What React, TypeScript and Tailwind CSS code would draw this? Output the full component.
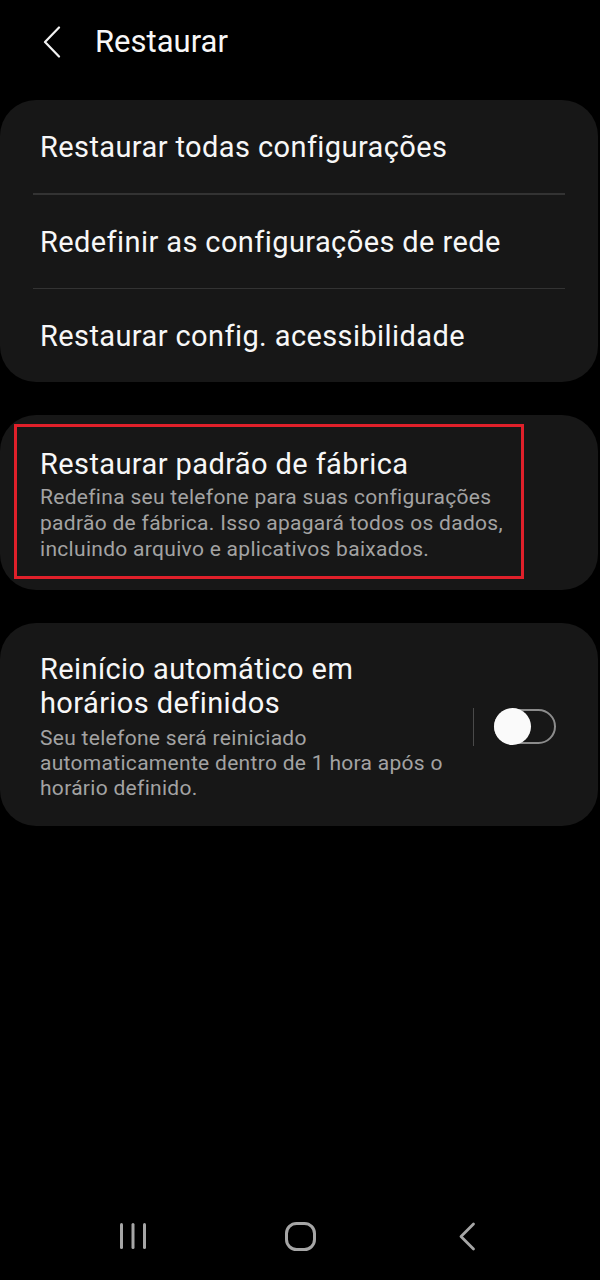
import React from "react"

const font = { fontFamily: "Roboto, 'Noto Sans', sans-serif" }

function BackChevron() {
  return (
    <svg width="20" height="32" viewBox="0 0 20 32" fill="none">
      <path d="M17 1.5 L3 16 L17 30.5" stroke="#f2f2f2" strokeWidth="2.2" strokeLinecap="round" strokeLinejoin="round" />
    </svg>
  )
}

function Toggle() {
  return (
    <div className="flex items-center gap-[20px] shrink-0">
      <div className="w-[1.5px] h-[38px] bg-[#4a4a4a]" />
      <div className="relative w-[62px] h-[35px]">
        <div className="absolute inset-0 rounded-full border-2 border-[#8c8c8c]" />
        <div className="absolute left-0 top-[-1px] w-[37px] h-[37px] rounded-full bg-[#fafafa]" />
      </div>
    </div>
  )
}

export default function App() {
  const items = [
    "Restaurar todas configurações",
    "Redefinir as configurações de rede",
    "Restaurar config. acessibilidade",
  ]

  return (
    <div className="min-h-[1280px] w-[600px] bg-black flex flex-col text-[#f7f7f7]" style={font}>
      {/* header */}
      <div className="h-[100px] flex items-start pt-[26px] pl-[42px]">
        <BackChevron />
        <span className="ml-[33px] -mt-[1px] text-[31px] leading-[34px]">Restaurar</span>
      </div>

      {/* first group */}
      <div className="bg-[#171717] rounded-[36px] mr-[2px]">
        {items.map((label, i) => (
          <div key={label}>
            {i > 0 && <div className="mx-[33px] h-[1.5px] bg-[#333333]" />}
            <div className="h-[93px] flex items-center pl-[40px] pt-[3px] text-[29px] tracking-[0.4px]">{label}</div>
          </div>
        ))}
      </div>

      {/* factory reset */}
      <div className="relative mt-[33px] bg-[#171717] rounded-[36px] mr-[2px] pl-[40px] pt-[32px] pb-[28px]">
        <div className="text-[29px] tracking-[0.4px] leading-[34px]">Restaurar padrão de fábrica</div>
        <div className="mt-[3px] text-[21px] tracking-[0.3px] leading-[26px] text-[#a3a3a3]">
          Redefina seu telefone para suas configurações
          <br />
          padrão de fábrica. Isso apagará todos os dados,
          <br />
          incluindo arquivo e aplicativos baixados.
        </div>
        <div className="absolute left-[14px] top-[9px] w-[510px] h-[155px] border-[3px] border-[#e0202a]" />
      </div>

      {/* auto restart */}
      <div className="mt-[33px] bg-[#171717] rounded-[36px] mr-[2px] pl-[40px] pr-[42px] pt-[29px] pb-[25px] flex items-center">
        <div className="flex-1">
          <div className="text-[29px] tracking-[0.4px] leading-[34px]">
            Reinício automático em
            <br />
            horários definidos
          </div>
          <div className="mt-[6px] text-[21px] tracking-[0.3px] leading-[25px] text-[#a3a3a3]">
            Seu telefone será reiniciado
            <br />
            automaticamente dentro de 1 hora após o
            <br />
            horário definido.
          </div>
        </div>
        <Toggle />
      </div>

      <div className="flex-1" />

      {/* navigation bar */}
      <div className="h-[84px] flex justify-center items-center pb-[4px]">
        <div className="w-[167px] flex justify-center">
          <svg width="28" height="28" viewBox="0 0 28 28">
            <rect x="1" y="1" width="3" height="26" rx="1.5" fill="#a6a6a6" />
            <rect x="12.5" y="1" width="3" height="26" rx="1.5" fill="#a6a6a6" />
            <rect x="24" y="1" width="3" height="26" rx="1.5" fill="#a6a6a6" />
          </svg>
        </div>
        <div className="w-[167px] flex justify-center">
          <svg width="31" height="29" viewBox="0 0 31 29">
            <rect x="1.5" y="1.5" width="28" height="26" rx="10" fill="none" stroke="#a6a6a6" strokeWidth="3" />
          </svg>
        </div>
        <div className="w-[167px] flex justify-center">
          <svg width="18" height="29" viewBox="0 0 18 29">
            <path d="M15.5 2 L3 14.5 L15.5 27" fill="none" stroke="#a6a6a6" strokeWidth="2.8" strokeLinecap="round" strokeLinejoin="round" />
          </svg>
        </div>
      </div>
    </div>
  )
}
